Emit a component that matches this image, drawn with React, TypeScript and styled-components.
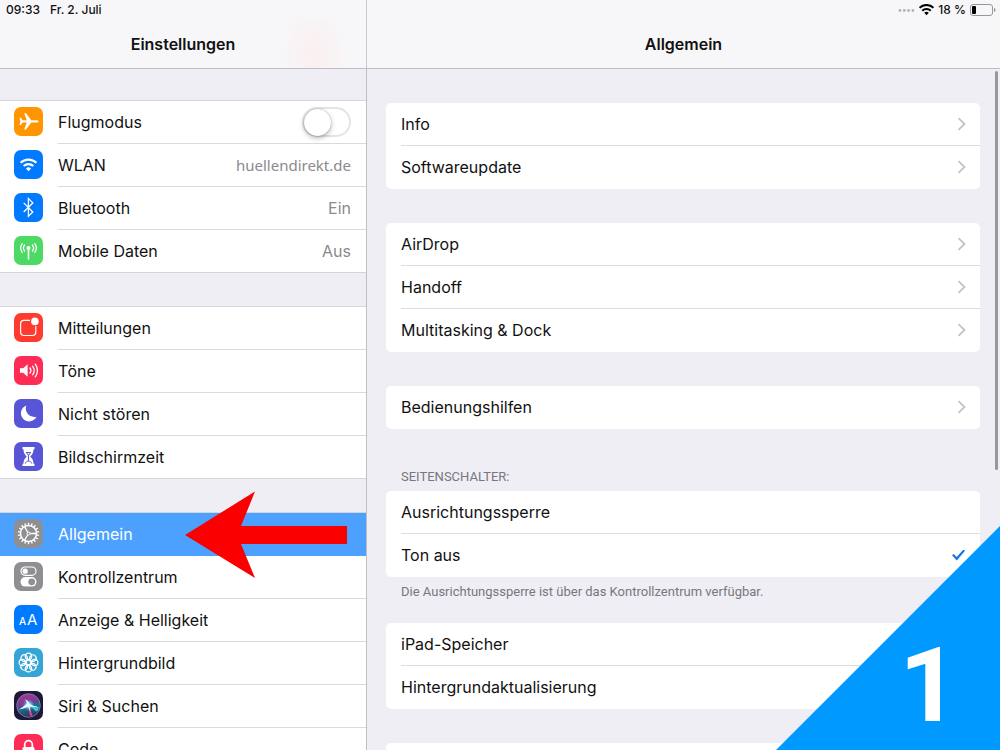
import React, { useState } from "react";
import styled, { createGlobalStyle } from "styled-components";

const GlobalStyle = createGlobalStyle`
  *, *::before, *::after { box-sizing: border-box; }
  body {
    margin: 0;
    background: #efeef5;
    color: #111;
    font-family: Inter, "Liberation Sans", sans-serif;
    font-size: 16px;
    line-height: 20px;
  }
  a { color: inherit; text-decoration: none; }
  button, input { font: inherit; color: inherit; margin: 0; }
  h1, h2, p, ul { margin: 0; padding: 0; }
  ul { list-style: none; }
`;

const Screen = styled.div`
  position: relative;
  display: flex;
  flex-direction: column;
  height: 100vh;
  overflow: hidden;
`;

const TopBar = styled.header`
  position: relative;
  flex: none;
  display: grid;
  grid-template-columns: 367px 1fr;
  grid-template-rows: 20px 48px;
  background: #f7f7f9;
  border-bottom: 1px solid #bfbec4;
`;

const Status = styled.div<{ $end?: boolean }>`
  display: flex;
  align-items: center;
  justify-content: ${(p) => (p.$end ? "flex-end" : "flex-start")};
  gap: ${(p) => (p.$end ? "4px" : "10px")};
  padding: 0 4px 0 6px;
  font-size: 12px;
  line-height: 20px;
  font-weight: 500;
  border-right: ${(p) => (p.$end ? "none" : "1px solid #c8c7cc")};
`;

const Title = styled.h1<{ $side?: boolean }>`
  display: flex;
  align-items: center;
  justify-content: center;
  font-size: 16px;
  font-weight: 600;
  border-right: ${(p) => (p.$side ? "1px solid #c8c7cc" : "none")};
  background: ${(p) =>
    p.$side ? "radial-gradient(ellipse 36px 50px at 314px 36px, #faefef, transparent)" : "none"};
`;

const Columns = styled.div`
  flex: 1;
  min-height: 0;
  display: grid;
  grid-template-columns: 367px minmax(0, 1fr);
`;

const Sidebar = styled.nav`
  display: flex;
  flex-direction: column;
  gap: 33px;
  padding-top: 31px;
  overflow-y: auto;
  scrollbar-width: none;
  border-right: 1px solid #bfbec4;
`;

const MenuGroup = styled.ul`
  flex: none;
  background: #fff;
  border-top: 1px solid #d6d5da;
`;

const MenuItem = styled.li<{ $active?: boolean }>`
  position: relative;
  background: ${(p) => (p.$active ? "#4ca1ff" : "transparent")};
  color: ${(p) => (p.$active ? "#fff" : "inherit")};
`;

const itemLayout = `
  display: flex;
  align-items: center;
  gap: 15px;
  height: 43px;
  padding-left: 14px;
`;

const MenuLink = styled.a`${itemLayout}`;
const MenuLabel = styled.label`${itemLayout}`;

const ItemBody = styled.span<{ $line: boolean }>`
  flex: 1;
  align-self: stretch;
  display: flex;
  align-items: center;
  justify-content: space-between;
  padding-right: 15px;
  border-bottom: 1px solid ${(p) => (p.$line ? "#dad9de" : "transparent")};
`;

const GroupEnd = styled.div`
  height: 1px;
  margin-top: -1px;
  background: #d6d5da;
`;

const Value = styled.span<{ $humanist?: boolean }>`
  color: #8a8a8e;
  font-family: ${(p) => (p.$humanist ? '"Noto Sans", sans-serif' : "inherit")};
  font-size: ${(p) => (p.$humanist ? "15px" : "16px")};
`;

const Switch = styled.input`
  appearance: none;
  display: flex;
  align-items: center;
  width: 49px;
  height: 30px;
  border: 2px solid #e4e4e6;
  border-radius: 15px;
  background: #fff;

  &::before {
    content: "";
    width: 27px;
    height: 27px;
    border-radius: 50%;
    background: #fff;
    box-shadow: 0 2px 5px rgba(0, 0, 0, 0.3), 0 0 1px rgba(0, 0, 0, 0.4);
  }
  &:checked { background: #4cd964; border-color: #4cd964; }
  &:checked::before { margin-left: 18px; }
`;

const IconSvg = styled.svg`
  flex: none;
  align-self: flex-start;
  display: block;
  width: 29px;
  height: 29px;
  margin-top: 6px;
  border-radius: 7px;
`;

const Arrow = styled.svg`
  position: absolute;
  z-index: 2;
  left: 185px;
  top: -22px;
  width: 162px;
  height: 87px;
  pointer-events: none;
`;

const Detail = styled.main`
  display: flex;
  flex-direction: column;
  padding: 34px 20px 0 19px;
  overflow-y: auto;
  scrollbar-width: none;
`;

const Section = styled.section`
  flex: none;
  margin-bottom: 34px;
`;

const Card = styled.div`
  min-height: 43px;
  background: #fff;
  border-radius: 5px;
  padding-left: 15px;
  overflow: hidden;
`;

const rowLayout = `
  display: flex;
  align-items: center;
  justify-content: space-between;
  width: 100%;
  height: 43px;
  padding: 0 14px 0 0;
  border: 0;
  border-bottom: 1px solid #dddce1;
  background: none;
  text-align: left;
  &:last-child { border-bottom-color: transparent; }
`;

const Row = styled.button`${rowLayout}`;
const ChoiceRow = styled.label`
  ${rowLayout}
  padding-right: 15px;
`;

const Radio = styled.input`
  appearance: none;
  width: 13px;
  height: 11px;
  &:checked {
    background: #1673e6;
    clip-path: polygon(0 52%, 12% 40%, 36% 68%, 88% 0, 100% 12%, 37% 100%);
  }
`;

const Caption = styled.h2`
  padding: 6px 15px;
  font-family: Roboto, sans-serif;
  font-size: 13px;
  line-height: 16px;
  font-weight: 400;
  color: #77777c;
`;

const Note = styled.p`
  padding: 7px 15px 0;
  margin-bottom: -11px;
  font-family: Roboto, sans-serif;
  font-size: 13px;
  line-height: 16px;
  color: #77777c;
`;

const ScrollThumb = styled.div`
  position: absolute;
  top: 71px;
  right: 2px;
  width: 3px;
  height: 399px;
  border-radius: 2px;
  background: #98979c;
`;

const Corner = styled.div`
  position: absolute;
  z-index: 3;
  right: 0;
  bottom: 0;
  width: 224px;
  height: 224px;
  display: flex;
  align-items: flex-end;
  justify-content: flex-end;
  padding: 0 41px 12px 0;
  background: #0099ff;
  clip-path: polygon(100% 0, 100% 100%, 0 100%);
  color: #fff;
  font-family: Roboto, sans-serif;
  font-size: 104px;
  line-height: 104px;
  font-weight: 700;
`;

type IconName =
  | "plane" | "wifi" | "bluetooth" | "cellular" | "notifications" | "sound" | "moon"
  | "hourglass" | "gear" | "controls" | "text" | "flower" | "siri" | "lock";

const tint: Record<IconName, string> = {
  plane: "#ff9500", wifi: "#007aff", bluetooth: "#007aff", cellular: "#4cd964",
  notifications: "#ff3b30", sound: "#ff2d55", moon: "#5856d6", hourglass: "#5856d6",
  gear: "#8e8e93", controls: "#8e8e93", text: "#007aff", flower: "#35a5d8",
  siri: "#1c1838", lock: "#ff2d55",
};

const around = (n: number) => Array.from({ length: n }, (_, i) => (i * 360) / n);

const WifiMark = () => (
  <g fill="none" strokeWidth="2.3">
    <path d="M6.6 12.8a11.3 11.3 0 0 1 15.8 0" />
    <path d="M9.7 16a6.9 6.9 0 0 1 9.6 0" />
    <path d="M14.5 21.2l-2.6-2.7a3.8 3.8 0 0 1 5.2 0z" fill="currentColor" stroke="none" />
  </g>
);

const glyphs: Record<IconName, React.ReactNode> = {
  plane: (
    <path
      fill="#fff"
      d="M24.5 14.4c0-.8-1.2-1.2-2.6-1.2h-4.6L12 6.2h-1.8l2.6 7H8.6L6.7 10.8H5.5l.9 3.6-.9 3.6h1.2l1.9-2.4h4.2l-2.6 7H12l5.3-7h4.6c1.4 0 2.6-.4 2.6-1.2z"
    />
  ),
  wifi: <g stroke="#fff" color="#fff"><WifiMark /></g>,
  bluetooth: (
    <path fill="none" stroke="#fff" strokeWidth="1.3" d="M9.7 9.9l9.1 9.1-4.4 4.3V5.6l4.4 4.3-9.1 9.1" />
  ),
  cellular: (
    <g fill="none" stroke="#fff" strokeWidth="1.3" strokeLinecap="round">
      <circle cx="14.5" cy="12" r="2" fill="#fff" stroke="none" />
      <path d="M14.5 13v10" strokeWidth="1.6" />
      <path d="M10.6 9a4.8 4.8 0 0 0 0 6M8.2 7.600a7.400 7.400 0 0 0 0 8.800" />
      <path d="M18.4 9a4.800 4.800 0 0 1 0 6M20.800 7.600a7.400 7.400 0 0 1 0 8.800" />
    </g>
  ),
  notifications: (
    <g>
      <path
        fill="none"
        stroke="#fff"
        strokeWidth="1.2"
        d="M16 7.3H10a3.4 3.4 0 0 0-3.4 3.4v8.4a3.4 3.4 0 0 0 3.4 3.4h8.4a3.4 3.4 0 0 0 3.4-3.4V13.2"
      />
      <circle cx="20.9" cy="8.4" r="3.8" fill="#fff" />
    </g>
  ),
  sound: (
    <g fill="none" stroke="#fff" strokeWidth="1.3" strokeLinecap="round">
      <path d="M6 12.2h3.1l4.5-3.9v12.4l-4.5-3.9H6z" fill="#fff" stroke="none" />
      <path d="M16 12a4.2 4.2 0 0 1 0 5M18.6 10.2a7 7 0 0 1 0 8.6M21.2 8.2a10 10 0 0 1 0 12.6" />
    </g>
  ),
  moon: <path fill="#fff" d="M12.3 6.5a8.2 8.2 0 1 0 10.2 11.3A8.7 8.7 0 0 1 12.3 6.5z" />,
  hourglass: (
    <g>
      <path
        fill="#fff"
        d="M8.500 5h12v2.200h-1c0 4-1.700 5.400-3.200 7.300 1.500 1.900 3.200 3.300 3.200 7.300h1V24h-12v-2.200h1c0-4 1.700-5.400 3.200-7.300-1.500-1.900-3.200-3.300-3.200-7.300h-1z"
      />
      <path fill="none" stroke="#5856d6" d="M12.300 10.500h4.400l-2.200 2.800zM14.500 13v6M11.300 21.500c.5-1.800 1.500-2.300 3.200-2.300s2.700.5 3.200 2.300" />
    </g>
  ),
  gear: (
    <g fill="none" stroke="#fff">
      <circle cx="14.500" cy="14.500" r="8" strokeWidth="1.500" />
      {around(18).map((a) => (
        <path key={a} d="M14.500 6.500V3.800" strokeWidth="1.400" transform={`rotate(${a} 14.500 14.500)`} />
      ))}
      {[90, 210, 330].map((a) => (
        <path key={a} d="M14.500 13.300V6.500" strokeWidth="1.300" transform={`rotate(${a} 14.500 14.500)`} />
      ))}
      <circle cx="14.500" cy="14.500" r="1.500" strokeWidth="1" />
    </g>
  ),
  controls: (
    <g>
      <rect x="7" y="5" width="15" height="8.400" rx="4.200" fill="none" stroke="#fff" strokeWidth="1.200" />
      <circle cx="11.200" cy="9.200" r="2.600" fill="#fff" />
      <rect x="6.500" y="15" width="16" height="9.600" rx="4.800" fill="#fff" />
      <circle cx="17.700" cy="19.800" r="3.400" fill="#8e8e93" />
    </g>
  ),
  text: (
    <g fill="#fff" fontFamily="Inter, sans-serif">
      <text x="5" y="20" fontSize="10" fontWeight="500">A</text>
      <text x="13" y="20" fontSize="15">A</text>
    </g>
  ),
  flower: (
    <g fill="none" stroke="#fff" strokeWidth="1.200">
      {around(8).map((a) => (
        <circle key={a} cx="14.500" cy="8.300" r="3.200" transform={`rotate(${a} 14.500 14.500)`} />
      ))}
      <circle cx="14.500" cy="14.500" r="2.300" />
    </g>
  ),
  siri: (
    <g>
      <defs>
        <linearGradient id="siriRing" x1="0.300" y1="0" x2="0.600" y2="1">
          <stop offset="0" stopColor="#b0338f" />
          <stop offset="0.450" stopColor="#6c3f9a" />
          <stop offset="0.550" stopColor="#20708e" />
          <stop offset="1" stopColor="#2b3157" />
        </linearGradient>
        <radialGradient id="siriGlow">
          <stop offset="0" stopColor="#fff" />
          <stop offset="0.400" stopColor="#9be9f5" stopOpacity="0.700" />
          <stop offset="1" stopColor="#36c3dc" stopOpacity="0" />
        </radialGradient>
      </defs>
      <circle cx="14.500" cy="14.500" r="11.800" fill="url(#siriRing)" stroke="#8a86a8" strokeWidth="0.800" />
      <path fill="#e5408f" d="M14.500 14l4 10.500c-2 1-2.600 0-3-1.500z" />
      <path fill="#35c7dd" d="M15 14l10 2c-.5 3-1.500 4-3 4.500z" />
      <circle cx="14.500" cy="14" r="6" fill="url(#siriGlow)" />
      <path fill="#e9fbff" d="M5 18.500c3-1.800 6-4 8-6-.3-1.800-1.200-3-2.500-4.500 2.500 1 4.200 2.700 5 4.800 2 1.500 5 2.500 8 3-3.500.5-6 .2-8-.6l1 6-2.500-5.500c-3 1.300-6 2.300-9 2.800z" />
    </g>
  ),
  lock: (
    <g>
      <path fill="none" stroke="#fff" strokeWidth="1.700" d="M10.700 14v-3.500a3.800 3.800 0 0 1 7.600 0V14" />
      <rect x="8.500" y="13" width="12" height="9.500" rx="1.500" fill="#fff" />
      <circle cx="14.500" cy="17" r="1.300" fill="#ff2d55" />
    </g>
  ),
};

const Icon = ({ name }: { name: IconName }) => (
  <IconSvg viewBox="0 0 29 29" aria-hidden="true">
    <rect width="29" height="29" fill={tint[name]} />
    {glyphs[name]}
  </IconSvg>
);

const Chevron = () => (
  <svg width="9" height="14" viewBox="0 0 9 14" fill="none" stroke="#c3c3c8" strokeWidth="1.800" aria-hidden="true">
    <path d="M1.500 1.200L7.500 7l-6 5.800" />
  </svg>
);

type Entry = { icon: IconName; label: string; value?: string; humanist?: boolean; active?: boolean; toggle?: boolean };

const menu: Entry[][] = [
  [
    { icon: "plane", label: "Flugmodus", toggle: true },
    { icon: "wifi", label: "WLAN", value: "huellendirekt.de", humanist: true },
    { icon: "bluetooth", label: "Bluetooth", value: "Ein" },
    { icon: "cellular", label: "Mobile Daten", value: "Aus" },
  ],
  [
    { icon: "notifications", label: "Mitteilungen" },
    { icon: "sound", label: "Töne" },
    { icon: "moon", label: "Nicht stören" },
    { icon: "hourglass", label: "Bildschirmzeit" },
  ],
  [
    { icon: "gear", label: "Allgemein", active: true },
    { icon: "controls", label: "Kontrollzentrum" },
    { icon: "text", label: "Anzeige & Helligkeit" },
    { icon: "flower", label: "Hintergrundbild" },
    { icon: "siri", label: "Siri & Suchen" },
    { icon: "lock", label: "Code" },
  ],
];

const MenuEntry = ({ entry, last }: { entry: Entry; last: boolean }) => {
  const line = !last && !entry.active;
  if (entry.toggle) {
    return (
      <MenuItem>
        <MenuLabel>
          <Icon name={entry.icon} />
          <ItemBody $line={line}>
            {entry.label}
            <Switch type="checkbox" role="switch" />
          </ItemBody>
        </MenuLabel>
      </MenuItem>
    );
  }
  return (
    <MenuItem $active={entry.active}>
      <MenuLink href="#" aria-current={entry.active ? "page" : undefined}>
        <Icon name={entry.icon} />
        <ItemBody $line={line}>
          {entry.label}
          {entry.value && <Value $humanist={entry.humanist}>{entry.value}</Value>}
        </ItemBody>
      </MenuLink>
      {entry.active && (
        <Arrow viewBox="0 0 162 87" aria-hidden="true">
          <path fill="#fa0000" d="M0 44L70 0.500 56 35H162V53H56L70 87z" />
        </Arrow>
      )}
    </MenuItem>
  );
};

const LinkSection = ({ items }: { items: string[] }) => (
  <Section>
    <Card>
      {items.map((item) => (
        <Row key={item} type="button">
          {item}
          <Chevron />
        </Row>
      ))}
    </Card>
  </Section>
);

export default function App() {
  const [sideSwitch, setSideSwitch] = useState("Ton aus");
  return (
    <Screen>
      <GlobalStyle />
      <TopBar>
        <Status>
          <span>09:33</span>
          <span>Fr. 2. Juli</span>
        </Status>
        <Status $end>
          <svg width="17" height="4" viewBox="0 0 17 4" fill="#b4b4b8" aria-hidden="true">
            <circle cx="2" cy="2.500" r="1.400" />
            <circle cx="6.300" cy="2.500" r="1.400" />
            <circle cx="10.600" cy="2.500" r="1.400" />
            <circle cx="14.900" cy="2.500" r="1.400" />
          </svg>
          <svg width="15" height="12" viewBox="6 8.500 17 13.500" stroke="#000" color="#000" aria-hidden="true">
            <WifiMark />
          </svg>
          <span>18 %</span>
          <svg width="26" height="12" viewBox="0 0 26 12" aria-hidden="true">
            <rect x="0.500" y="0.500" width="22" height="11" rx="2.500" fill="none" stroke="#98989c" />
            <rect x="2" y="2" width="4" height="8" rx="1" fill="#000" />
            <path d="M24 4v4c2-.6 2-3.400 0-4z" fill="#98989c" />
          </svg>
        </Status>
        <Title $side>Einstellungen</Title>
        <Title>Allgemein</Title>
      </TopBar>
      <Columns>
        <Sidebar aria-label="Einstellungen">
          {menu.map((group) => (
            <div key={group[0].label}>
              <MenuGroup>
                {group.map((entry, i) => (
                  <MenuEntry key={entry.label} entry={entry} last={i === group.length - 1} />
                ))}
              </MenuGroup>
              <GroupEnd />
            </div>
          ))}
        </Sidebar>
        <Detail>
          <LinkSection items={["Info", "Softwareupdate"]} />
          <LinkSection items={["AirDrop", "Handoff", "Multitasking & Dock"]} />
          <LinkSection items={["Bedienungshilfen"]} />
          <Section>
            <Caption>SEITENSCHALTER:</Caption>
            <Card role="radiogroup" aria-label="Seitenschalter">
              {["Ausrichtungssperre", "Ton aus"].map((option) => (
                <ChoiceRow key={option}>
                  {option}
                  <Radio
                    type="radio"
                    name="side-switch"
                    checked={sideSwitch === option}
                    onChange={() => setSideSwitch(option)}
                  />
                </ChoiceRow>
              ))}
            </Card>
            <Note>Die Ausrichtungssperre ist über das Kontrollzentrum verfügbar.</Note>
          </Section>
          <LinkSection items={["iPad-Speicher", "Hintergrundaktualisierung"]} />
          <LinkSection items={[]} />
        </Detail>
      </Columns>
      <ScrollThumb />
      <Corner>1</Corner>
    </Screen>
  );
}
